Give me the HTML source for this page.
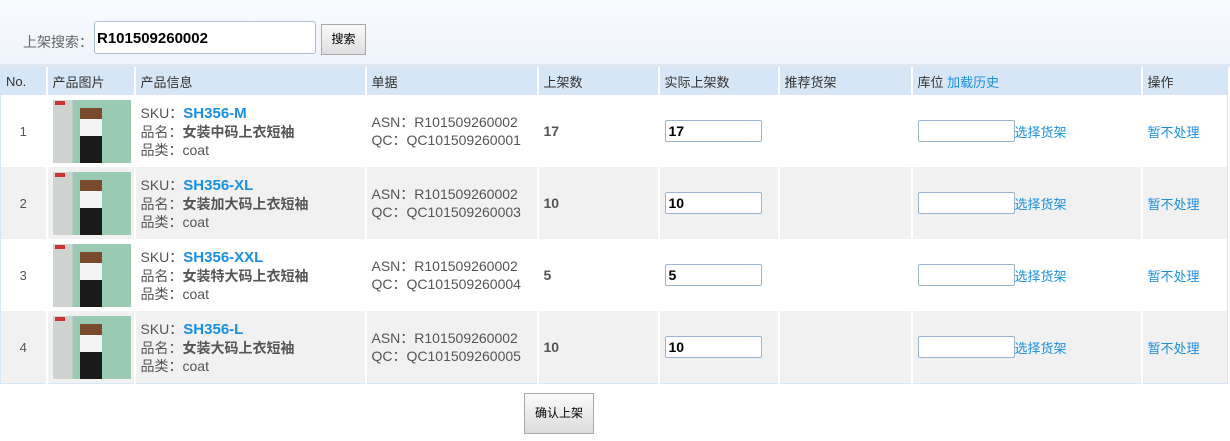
<!DOCTYPE html>
<html><head><meta charset="utf-8"><style>
body{margin:0;width:1230px;height:441px;background:#fff;font-family:"Liberation Sans","Noto Sans CJK SC",sans-serif;font-size:13px;color:#555;position:relative;overflow:hidden}
.top{position:absolute;left:0;top:0;width:1230px;height:64px;background:linear-gradient(#f9fbfe,#eef4fb);border-bottom:3px solid #dfe8f2}
.lbl{position:absolute;left:23px;top:32px;font-size:14px;color:#666}
.sin{position:absolute;left:94px;top:21px;width:222px;height:33px;border:1px solid #a9bdd3;border-radius:3px;background:#fff;box-sizing:border-box;font-weight:bold;font-size:15px;color:#000;padding:8px 0 0 2px}
.sbtn{position:absolute;left:321px;top:24px;width:45px;height:31px;border:1px solid #a8a8a8;background:linear-gradient(#fafafa,#dedede);box-sizing:border-box;font-size:12px;color:#000;text-align:center;line-height:29px}
table{position:absolute;left:0px;top:67px;border-collapse:collapse;width:1227px;table-layout:fixed;border:1px solid #d6e6f6}
th{background:#d6e6f6;height:27px;font-weight:normal;text-align:left;padding:0 0 0 5px;color:#333;border-left:2px solid #fff;font-size:13px}
td{border-left:2px solid #fff;padding:0 0 0 5px;height:72px;vertical-align:middle}
tr.g td{background:#f1f1f1}
.no{text-align:center;padding:0}
.pic{width:78px;height:63px;background:linear-gradient(90deg,#cfd3d0 0 25%,#9bcab3 25% 100%);position:relative;overflow:hidden}
.pic:before{content:"";position:absolute;left:27px;top:8px;width:22px;height:56px;background:linear-gradient(#7a4b2e 0 20%,#f4f4f4 20% 50%,#1a1a1a 50%)}
.pic:after{content:"";position:absolute;left:2px;top:1px;width:10px;height:4px;background:#c33}
.sku{font-size:14px;line-height:18px}
.sku b{color:#1a8fe0;font-size:15px}
.sku .n{font-weight:bold}
.bold{font-weight:bold;font-size:14px}
.inp{width:97px;height:22px;border:1px solid #9bb4cf;border-radius:2px;box-sizing:border-box;font-weight:bold;color:#000;font-size:14px;padding:2px 0 0 3px;background:#fff}
a{color:#1a8fe0;text-decoration:none}
.loc{display:flex;align-items:center}
.cbtn{position:absolute;left:524px;top:393px;width:70px;height:41px;border:1px solid #a8a8a8;background:linear-gradient(#fafafa,#dcdcdc);box-sizing:border-box;text-align:center;line-height:39px;font-size:12px;color:#000}
</style></head><body>
<div class="top"></div>
<div class="lbl">上架搜索：</div>
<div class="sin">R101509260002</div>
<div class="sbtn">搜索</div>
<table>
<colgroup><col style="width:46px"><col style="width:88px"><col style="width:231px"><col style="width:172px"><col style="width:121px"><col style="width:120px"><col style="width:133px"><col style="width:230px"><col style="width:86px"></colgroup>
<tr><th style="border-left:0">No.</th><th>产品图片</th><th>产品信息</th><th>单据</th><th>上架数</th><th>实际上架数</th><th>推荐货架</th><th>库位 <a>加载历史</a></th><th>操作</th></tr>
<tr><td class="no" style="border-left:0">1</td><td><div class="pic"></div></td><td class="sku">SKU：<b>SH356-M</b><br>品名：<span class="n">女装中码上衣短袖</span><br>品类：coat</td><td class="sku">ASN：R101509260002<br>QC：QC101509260001</td><td class="bold">17</td><td><div class="inp">17</div></td><td></td><td><div class="loc"><div class="inp"></div><a>选择货架</a></div></td><td><a>暂不处理</a></td></tr>
<tr class="g"><td class="no" style="border-left:0">2</td><td><div class="pic"></div></td><td class="sku">SKU：<b>SH356-XL</b><br>品名：<span class="n">女装加大码上衣短袖</span><br>品类：coat</td><td class="sku">ASN：R101509260002<br>QC：QC101509260003</td><td class="bold">10</td><td><div class="inp">10</div></td><td></td><td><div class="loc"><div class="inp"></div><a>选择货架</a></div></td><td><a>暂不处理</a></td></tr>
<tr><td class="no" style="border-left:0">3</td><td><div class="pic"></div></td><td class="sku">SKU：<b>SH356-XXL</b><br>品名：<span class="n">女装特大码上衣短袖</span><br>品类：coat</td><td class="sku">ASN：R101509260002<br>QC：QC101509260004</td><td class="bold">5</td><td><div class="inp">5</div></td><td></td><td><div class="loc"><div class="inp"></div><a>选择货架</a></div></td><td><a>暂不处理</a></td></tr>
<tr class="g"><td class="no" style="border-left:0">4</td><td><div class="pic"></div></td><td class="sku">SKU：<b>SH356-L</b><br>品名：<span class="n">女装大码上衣短袖</span><br>品类：coat</td><td class="sku">ASN：R101509260002<br>QC：QC101509260005</td><td class="bold">10</td><td><div class="inp">10</div></td><td></td><td><div class="loc"><div class="inp"></div><a>选择货架</a></div></td><td><a>暂不处理</a></td></tr>
</table>
<div class="cbtn">确认上架</div>
</body></html>
